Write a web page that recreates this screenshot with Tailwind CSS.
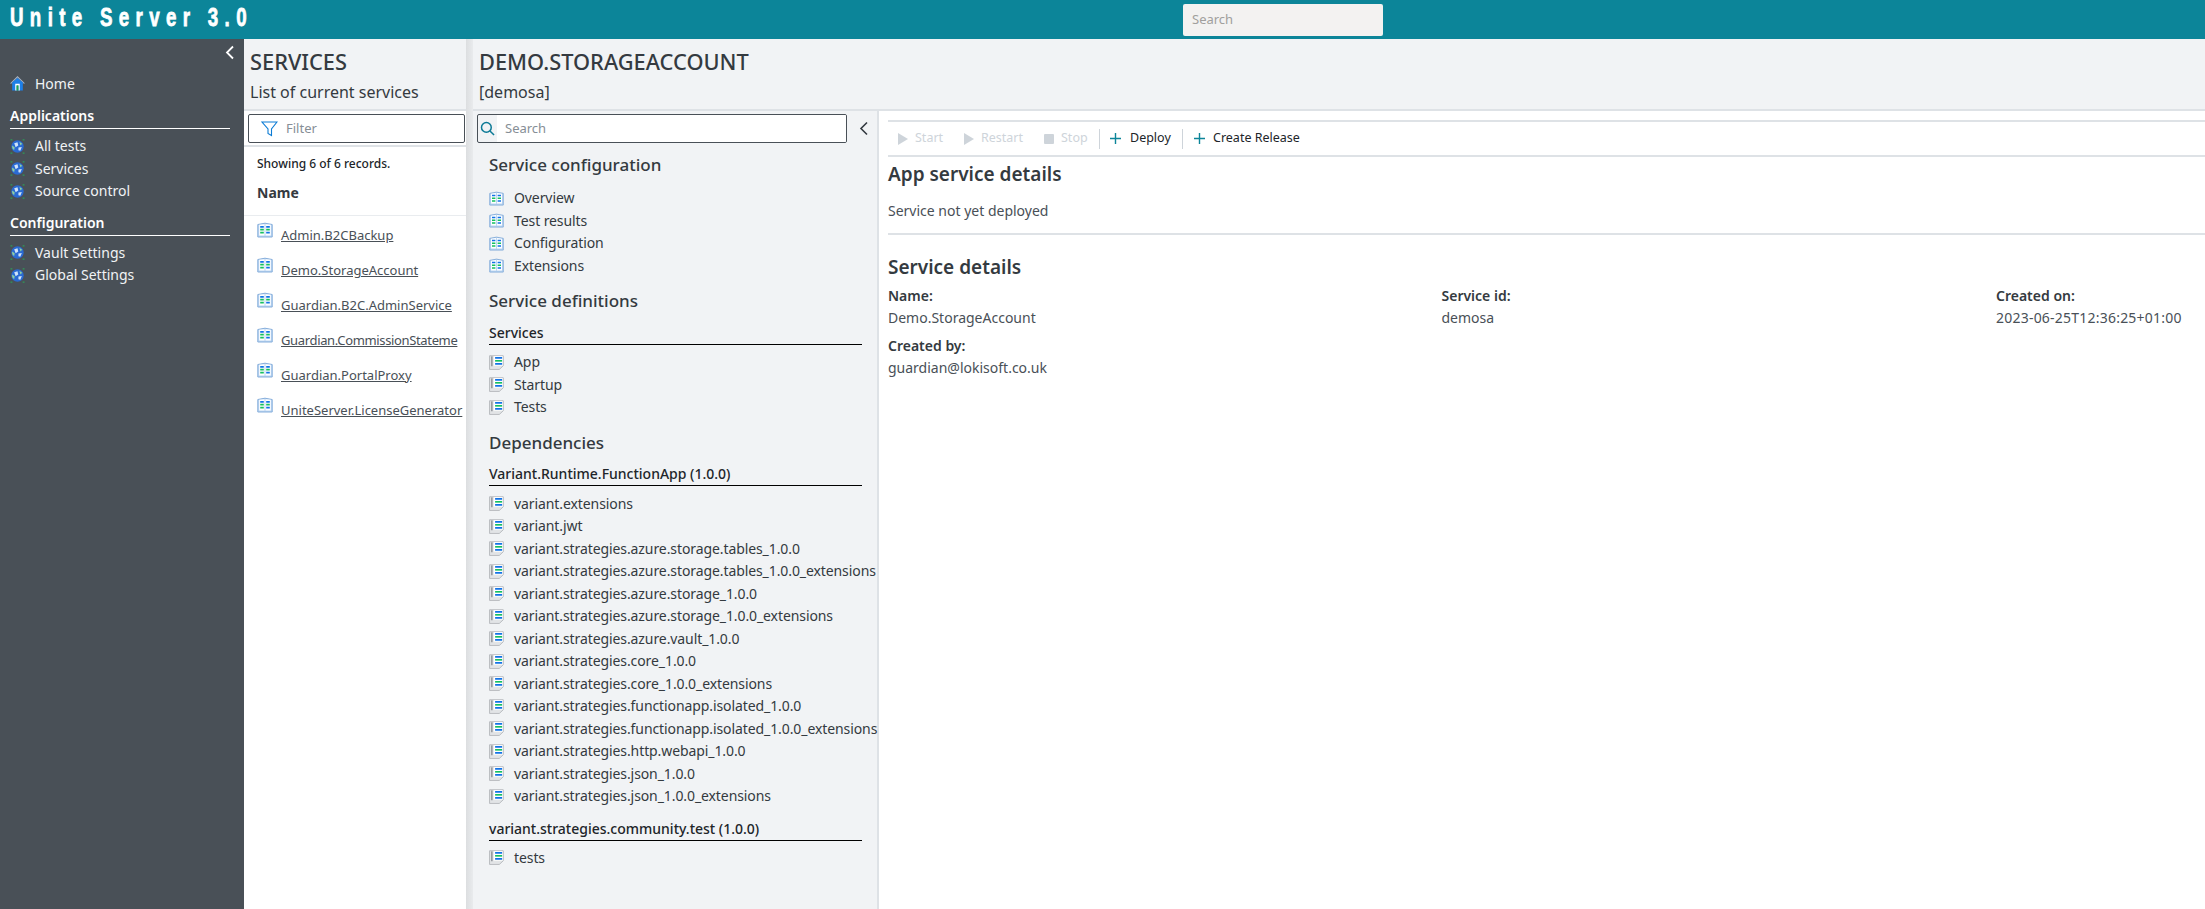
<!DOCTYPE html>
<html lang="en">
<head>
  <meta charset="UTF-8" />
  <title>Unite Server 3.0</title>
  <script src="https://cdn.jsdelivr.net/npm/@tailwindcss/browser@4"></script>
</head>
<body class="h-[909px] w-[2205px] overflow-hidden bg-white font-['Noto_Sans',sans-serif] text-[14px] text-[#343a40]">
  <!-- shared icons -->
  <svg class="hidden">
    <symbol id="book" viewBox="0 0 16 16">
      <path d="M.8 2.5 8 1.2 15.2 2.5V15H.8Z" fill="#bcd6f2" stroke="#86aedb" />
      <path d="M2.2 2.8 7.5 2.2V13.4H2.2ZM8.5 2.2 13.8 2.8V13.4H8.5Z" fill="#fff" />
      <path d="M3.2 4.8H6.8M9.2 4.8H12.8M9.2 10.6H12.8" stroke="#1273e6" stroke-width="1.7" />
      <path d="M3.2 7.7H6.8M9.2 7.7H12.8M3.2 10.6H6.8" stroke="#16c060" stroke-width="1.7" />
    </symbol>
    <symbol id="doc" viewBox="0 0 16 16">
      <path d="M.6.8H15.2V11.5L11 15.4H.6Z" fill="#e2e4e6" stroke="#b5b9bd" />
      <path d="M5 1.2H14.6V11.4H5Z" fill="#fff" />
      <path d="M6.5 3H14M6.5 9.4H14" stroke="#1273e6" stroke-width="1.8" />
      <path d="M6.5 6.2H14" stroke="#16c060" stroke-width="1.8" />
      <path d="M3 1.5V12" stroke="#979ba0" stroke-width="1.8" />
    </symbol>
    <symbol id="globe" viewBox="0 0 16 16">
      <circle cx="8" cy="8" r="6.6" fill="#2a6ad2" />
      <path d="M4.5 4.5 8 3.5 8.8 7 6 8.8ZM9 9 12.6 8.4 11 12.6 9 12Z" fill="#cfe3fa" />
      <path d="M2.2 7 5 8.8 4.4 12 2.4 9.8ZM10 2.8 13 5 11.2 6.8Z" fill="#8fd0a0" />
      <path d="M.5 1H2.5M13.5 1H15.5M.5 15H2.5M13.5 15H15.5" stroke="#2f9a58" stroke-width="1.4" />
    </symbol>
    <symbol id="home" viewBox="0 0 16 16">
      <path d="M.6 8 8 .8 15.4 8" fill="#66788f" stroke="#a9b4c2" stroke-width="1.1" />
      <path d="M2.3 6.8 8 2.2 13.7 6.8V15.4H2.3Z" fill="#1d7fe8" />
      <path d="M5.6 8.2H10.4V15.4H9V10H7V15.4H5.6Z" fill="#fff" />
      <path d="M7 10H9V15.4H7Z" fill="#22a84a" />
    </symbol>
  </svg>

  <header class="flex h-[39px] items-center bg-[#0c8599]">
    <div class="w-[1183px] pb-[4px] pl-[10px]">
      <div class="origin-left scale-x-[0.72] whitespace-nowrap font-['Liberation_Sans',sans-serif] text-[26px] font-bold leading-[35px] tracking-[8.8px] text-white [-webkit-text-stroke:0.8px_white]">Unite Server 3.0</div>
    </div>
    <div class="flex h-[32px] w-[200px] items-center rounded-[2px] bg-[#f3f2f1] pl-[9px] text-[13px] text-[#a19f9d]">Search</div>
  </header>

  <div class="flex h-[870px]">
    <!-- main navigation -->
    <aside class="w-[244px] shrink-0 bg-[#495057] pl-[10px] text-[#f1f3f5]">
      <div class="flex h-[26px] w-[225px] items-center justify-end">
        <svg class="h-[15px] w-[10px]" viewBox="0 0 10 15" fill="none" stroke="#fff" stroke-width="1.8"><path d="M8 1.5 2 7.5 8 13.5" /></svg>
      </div>
      <div class="mt-[7px] flex h-[22px] items-center gap-[10px]">
        <svg class="h-[15px] w-[15px] shrink-0"><use href="#home" /></svg><span>Home</span>
      </div>
      <div class="mt-[10px] w-[220px] border-b border-white pb-[1px] text-[14px] font-semibold leading-[23px] text-white">Applications</div>
      <ul class="mt-[6px] leading-[22.5px]">
        <li class="flex items-center gap-[10px]"><svg class="h-[15px] w-[15px] shrink-0"><use href="#globe" /></svg>All tests</li>
        <li class="flex items-center gap-[10px]"><svg class="h-[15px] w-[15px] shrink-0"><use href="#globe" /></svg>Services</li>
        <li class="flex items-center gap-[10px]"><svg class="h-[15px] w-[15px] shrink-0"><use href="#globe" /></svg>Source control</li>
      </ul>
      <div class="mt-[8px] w-[220px] border-b border-white pb-[1px] text-[14px] font-semibold leading-[23px] text-white">Configuration</div>
      <ul class="mt-[6px] leading-[22.5px]">
        <li class="flex items-center gap-[10px]"><svg class="h-[15px] w-[15px] shrink-0"><use href="#globe" /></svg>Vault Settings</li>
        <li class="flex items-center gap-[10px]"><svg class="h-[15px] w-[15px] shrink-0"><use href="#globe" /></svg>Global Settings</li>
      </ul>
    </aside>

    <!-- services list -->
    <section class="w-[222px] shrink-0 overflow-hidden">
      <div class="h-[72px] border-b-2 border-[#dee2e6] bg-[#f1f3f5] pl-[6px] pt-[8px]">
        <h1 class="text-[21.8px] font-medium leading-[30px]">SERVICES</h1>
        <p class="text-[16px] leading-[30px]">List of current services</p>
      </div>
      <div class="border-b-2 border-[#dee2e6] pb-[2px] pl-[4px] pr-[1px] pt-[3px]">
        <div class="flex h-[29px] items-center gap-[8px] rounded-[2px] border border-[#495057] pl-[12px] text-[13px] text-[#868e96]">
          <svg class="h-[17px] w-[17px]" viewBox="0 0 17 17" fill="none" stroke="#0c7cd5" stroke-width="1.1"><path d="M1 2H16L10.5 9V15.5L7 13.5V9Z" /></svg>
          Filter
        </div>
      </div>
      <p class="pl-[13px] pt-[7px] text-[12px] font-medium leading-[20px] text-[#212529]">Showing 6 of 6 records.</p>
      <div class="h-[42px] border-b border-[#e9ecef] pl-[13px] pt-[9px] text-[14px] font-bold leading-[20px]">Name</div>
      <ul class="pl-[13px] text-[13px] text-[#495057]">
        <li class="flex h-[35px] gap-[8px] whitespace-nowrap pt-[6px]"><svg class="h-[16px] w-[16px] shrink-0"><use href="#book" /></svg><a class="mt-[4px] underline">Admin.B2CBackup</a></li>
        <li class="flex h-[35px] gap-[8px] whitespace-nowrap pt-[6px]"><svg class="h-[16px] w-[16px] shrink-0"><use href="#book" /></svg><a class="mt-[4px] underline">Demo.StorageAccount</a></li>
        <li class="flex h-[35px] gap-[8px] whitespace-nowrap pt-[6px]"><svg class="h-[16px] w-[16px] shrink-0"><use href="#book" /></svg><a class="mt-[4px] underline">Guardian.B2C.AdminService</a></li>
        <li class="flex h-[35px] gap-[8px] whitespace-nowrap pt-[6px]"><svg class="h-[16px] w-[16px] shrink-0"><use href="#book" /></svg><a class="mt-[4px] underline tracking-[-0.35px]">Guardian.CommissionStateme</a></li>
        <li class="flex h-[35px] gap-[8px] whitespace-nowrap pt-[6px]"><svg class="h-[16px] w-[16px] shrink-0"><use href="#book" /></svg><a class="mt-[4px] underline">Guardian.PortalProxy</a></li>
        <li class="flex h-[35px] gap-[8px] whitespace-nowrap pt-[6px]"><svg class="h-[16px] w-[16px] shrink-0"><use href="#book" /></svg><a class="mt-[4px] underline">UniteServer.LicenseGenerator</a></li>
      </ul>
    </section>

    <div class="w-[7px] shrink-0 bg-gradient-to-r from-[#dcdee0] to-[#e9ebed]"></div>

    <!-- service detail -->
    <section class="flex min-w-0 flex-1 flex-col">
      <div class="h-[72px] shrink-0 border-b-2 border-[#dee2e6] bg-[#f1f3f5] pl-[6px] pt-[8px]">
        <h1 class="text-[21.8px] font-medium leading-[30px]">DEMO.STORAGEACCOUNT</h1>
        <p class="text-[16px] leading-[30px]">[demosa]</p>
      </div>
      <div class="flex flex-1">
        <nav class="w-[406px] shrink-0 border-r-2 border-[#dee2e6] bg-[#f1f3f5] pl-[4px]">
          <div class="flex items-center pt-[3px]">
            <div class="flex h-[29px] w-[370px] items-center overflow-hidden rounded-[2px] border border-[#495057]">
              <svg class="mx-[2px] h-[15px] w-[15px] shrink-0" viewBox="0 0 16 16" fill="none" stroke="#0c7a96" stroke-width="1.6"><circle cx="6.8" cy="6.8" r="5.2" /><path d="M10.6 10.6 15 15" /></svg>
              <div class="flex h-full flex-1 items-center bg-white pl-[8px] text-[13px] text-[#868e96]">Search</div>
            </div>
            <svg class="ml-[12px] h-[15px] w-[10px]" viewBox="0 0 10 15" fill="none" stroke="#343a40" stroke-width="1.6"><path d="M8 1.5 2 7.5 8 13.5" /></svg>
          </div>
          <div class="pl-[12px]">
            <h2 class="mt-[9px] text-[17px] font-medium leading-[26px]">Service configuration</h2>
            <ul class="mt-[9px] leading-[22.5px] tracking-[-0.09px]">
              <li class="flex items-center gap-[10px]"><svg class="h-[15px] w-[15px] shrink-0"><use href="#book" /></svg>Overview</li>
              <li class="flex items-center gap-[10px]"><svg class="h-[15px] w-[15px] shrink-0"><use href="#book" /></svg>Test results</li>
              <li class="flex items-center gap-[10px]"><svg class="h-[15px] w-[15px] shrink-0"><use href="#book" /></svg>Configuration</li>
              <li class="flex items-center gap-[10px]"><svg class="h-[15px] w-[15px] shrink-0"><use href="#book" /></svg>Extensions</li>
            </ul>
            <h2 class="mt-[11px] text-[17px] font-medium leading-[26px]">Service definitions</h2>
            <div class="mt-[8px] w-[373px] border-b border-black text-[14px] font-medium leading-[22px] text-[#212529]">Services</div>
            <ul class="mt-[6px] leading-[22.5px] tracking-[-0.09px]">
              <li class="flex items-center gap-[10px]"><svg class="h-[15px] w-[15px] shrink-0"><use href="#doc" /></svg>App</li>
              <li class="flex items-center gap-[10px]"><svg class="h-[15px] w-[15px] shrink-0"><use href="#doc" /></svg>Startup</li>
              <li class="flex items-center gap-[10px]"><svg class="h-[15px] w-[15px] shrink-0"><use href="#doc" /></svg>Tests</li>
            </ul>
            <h2 class="mt-[11px] text-[17px] font-medium leading-[26px]">Dependencies</h2>
            <div class="mt-[7px] w-[373px] border-b border-black text-[14px] font-medium leading-[22px] text-[#212529]">Variant.Runtime.FunctionApp (1.0.0)</div>
            <ul class="mt-[7px] whitespace-nowrap leading-[22.5px] tracking-[-0.09px]">
              <li class="flex items-center gap-[10px]"><svg class="h-[15px] w-[15px] shrink-0"><use href="#doc" /></svg>variant.extensions</li>
              <li class="flex items-center gap-[10px]"><svg class="h-[15px] w-[15px] shrink-0"><use href="#doc" /></svg>variant.jwt</li>
              <li class="flex items-center gap-[10px]"><svg class="h-[15px] w-[15px] shrink-0"><use href="#doc" /></svg>variant.strategies.azure.storage.tables_1.0.0</li>
              <li class="flex items-center gap-[10px]"><svg class="h-[15px] w-[15px] shrink-0"><use href="#doc" /></svg>variant.strategies.azure.storage.tables_1.0.0_extensions</li>
              <li class="flex items-center gap-[10px]"><svg class="h-[15px] w-[15px] shrink-0"><use href="#doc" /></svg>variant.strategies.azure.storage_1.0.0</li>
              <li class="flex items-center gap-[10px]"><svg class="h-[15px] w-[15px] shrink-0"><use href="#doc" /></svg>variant.strategies.azure.storage_1.0.0_extensions</li>
              <li class="flex items-center gap-[10px]"><svg class="h-[15px] w-[15px] shrink-0"><use href="#doc" /></svg>variant.strategies.azure.vault_1.0.0</li>
              <li class="flex items-center gap-[10px]"><svg class="h-[15px] w-[15px] shrink-0"><use href="#doc" /></svg>variant.strategies.core_1.0.0</li>
              <li class="flex items-center gap-[10px]"><svg class="h-[15px] w-[15px] shrink-0"><use href="#doc" /></svg>variant.strategies.core_1.0.0_extensions</li>
              <li class="flex items-center gap-[10px]"><svg class="h-[15px] w-[15px] shrink-0"><use href="#doc" /></svg>variant.strategies.functionapp.isolated_1.0.0</li>
              <li class="flex items-center gap-[10px]"><svg class="h-[15px] w-[15px] shrink-0"><use href="#doc" /></svg>variant.strategies.functionapp.isolated_1.0.0_extensions</li>
              <li class="flex items-center gap-[10px]"><svg class="h-[15px] w-[15px] shrink-0"><use href="#doc" /></svg>variant.strategies.http.webapi_1.0.0</li>
              <li class="flex items-center gap-[10px]"><svg class="h-[15px] w-[15px] shrink-0"><use href="#doc" /></svg>variant.strategies.json_1.0.0</li>
              <li class="flex items-center gap-[10px]"><svg class="h-[15px] w-[15px] shrink-0"><use href="#doc" /></svg>variant.strategies.json_1.0.0_extensions</li>
            </ul>
            <div class="mt-[10px] w-[373px] border-b border-black text-[14px] font-medium leading-[22px] text-[#212529]">variant.strategies.community.test (1.0.0)</div>
            <ul class="mt-[6px] leading-[22.5px] tracking-[-0.09px]">
              <li class="flex items-center gap-[10px]"><svg class="h-[15px] w-[15px] shrink-0"><use href="#doc" /></svg>tests</li>
            </ul>
          </div>
        </nav>
        <main class="min-w-0 flex-1 pl-[9px] pt-[9px]">
          <div class="flex h-[37px] items-center whitespace-nowrap border-y-2 border-[#dee2e6] pl-[10px] text-[12.5px]">
            <div class="flex w-[66px] items-center gap-[7px] text-[#ced4da]"><svg class="h-[12px] w-[10px]" viewBox="0 0 10 12" fill="#ced4da"><path d="M0 0 10 6 0 12Z" /></svg>Start</div>
            <div class="flex w-[80px] items-center gap-[7px] text-[#ced4da]"><svg class="h-[12px] w-[10px]" viewBox="0 0 10 12" fill="#ced4da"><path d="M0 0 10 6 0 12Z" /></svg>Restart</div>
            <div class="flex w-[55px] items-center gap-[7px] text-[#ced4da]"><div class="h-[10px] w-[10px] rounded-[1px] bg-[#ced4da]"></div>Stop</div>
            <div class="mr-[10px] h-[20px] w-px bg-[#ced4da]"></div>
            <div class="flex w-[72px] items-center gap-[9px] text-[#212529]"><svg class="h-[11px] w-[11px]" viewBox="0 0 11 11" stroke="#0c8599" stroke-width="1.4"><path d="M5.5 0V11M0 5.5H11" /></svg>Deploy</div>
            <div class="mr-[11px] h-[20px] w-px bg-[#ced4da]"></div>
            <div class="flex items-center gap-[8px] text-[#212529]"><svg class="h-[11px] w-[11px]" viewBox="0 0 11 11" stroke="#0c8599" stroke-width="1.4"><path d="M5.5 0V11M0 5.5H11" /></svg>Create Release</div>
          </div>
          <h3 class="mt-[4px] text-[19px] font-semibold leading-[27px]">App service details</h3>
          <p class="mt-[12px] leading-[22px] text-[#495057]">Service not yet deployed</p>
          <hr class="mt-[11px] border-t-2 border-[#dee2e6]" />
          <h3 class="mt-[19px] text-[19px] font-semibold leading-[27px]">Service details</h3>
          <dl class="mt-[4px] grid grid-cols-[553.5px_554.5px_1fr] gap-y-[6px] leading-[22px]">
            <div><dt class="font-semibold">Name:</dt><dd class="text-[#495057]">Demo.StorageAccount</dd></div>
            <div><dt class="font-semibold">Service id:</dt><dd class="text-[#495057]">demosa</dd></div>
            <div><dt class="font-semibold">Created on:</dt><dd class="tracking-[0.22px] text-[#495057]">2023-06-25T12:36:25+01:00</dd></div>
            <div><dt class="font-semibold">Created by:</dt><dd class="text-[#495057]">guardian@lokisoft.co.uk</dd></div>
          </dl>
        </main>
      </div>
    </section>
  </div>
</body>
</html>
